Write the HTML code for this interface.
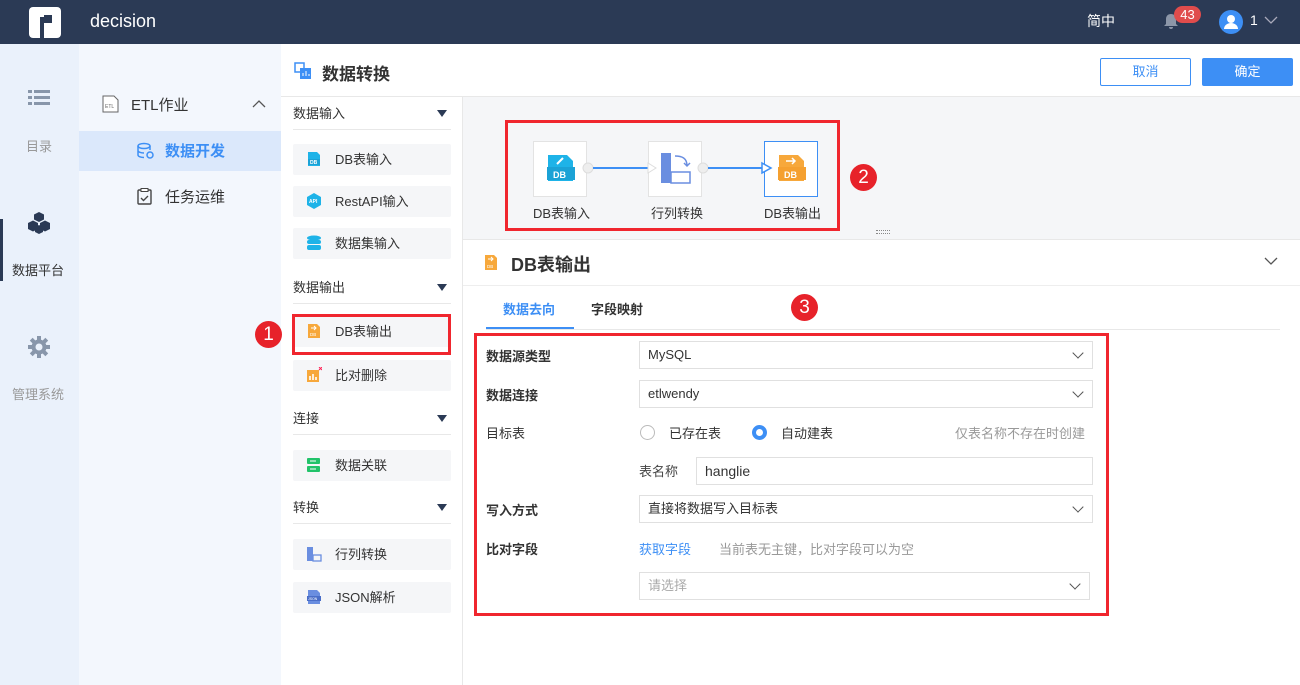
<!DOCTYPE html>
<html><head><meta charset="utf-8"><style>
*{box-sizing:border-box;margin:0;padding:0}
body{width:1300px;height:685px;overflow:hidden;font-family:"Liberation Sans","Noto Sans CJK SC",sans-serif;background:#fff;position:relative;color:#333}
.a{position:absolute}
.top{left:0;top:0;width:1300px;height:44px;background:#2b3a55}
.nav1{left:0;top:44px;width:79px;height:641px;background:#eaf1fb}
.nav2{left:79px;top:44px;width:202px;height:641px;background:#f3f7fd}
.t{font-size:14px;white-space:nowrap}
.item{position:absolute;left:293px;width:158px;height:31px;background:#f5f6f8;border-radius:2px;font-size:13px;color:#333;line-height:31px;padding-left:42px}
.item svg{position:absolute;left:13px;top:7px}
.sec{position:absolute;left:293px;width:158px;height:30px;font-size:13px;color:#333;border-bottom:1px solid #e8e8e8;line-height:28px}
.sec:after{content:"";position:absolute;right:4px;top:10px;border:5px solid transparent;border-top:7px solid #2b3a55;border-bottom:0}
.lbl{position:absolute;left:486px;font-size:13px;font-weight:bold;color:#333}
.sel{position:absolute;left:639px;width:454px;height:28px;border:1px solid #e0e0e0;font-size:13px;line-height:26px;padding-left:8px;color:#333}
.sel:after{content:"";position:absolute;right:10px;top:7px;width:7px;height:7px;border-right:1.5px solid #555;border-bottom:1.5px solid #555;transform:rotate(45deg)}
.badge{position:absolute;width:27px;height:27px;border-radius:50%;background:#e7222a;color:#fff;font-size:19px;text-align:center;line-height:27px}
.node{position:absolute;top:141px;width:54px;height:56px;background:#fff;border:1px solid #e3e3e3}
</style></head><body>
<div class="a top"></div>
<svg class="a" style="left:29px;top:7px" width="32" height="31" viewBox="0 0 32 31"><rect x="0" y="0" width="32" height="31" rx="4" fill="#fff"/><rect x="11" y="10" width="4" height="21" fill="#2b3a55"/><rect x="15" y="8" width="8" height="8" fill="#2b3a55"/></svg>
<div class="a" style="left:90px;top:11px;font-size:18px;color:#fff">decision</div>
<div class="a t" style="left:1087px;top:11px;color:#fff">简中</div>
<svg class="a" style="left:1163px;top:13px" width="16" height="17" viewBox="0 0 16 17"><path d="M8 1c3 0 5 2 5 5v5l2 2H1l2-2V6c0-3 2-5 5-5zM6 14h4a2 2 0 0 1-4 0z" fill="#8c96a8"/></svg>
<div class="a" style="left:1174px;top:6px;width:27px;height:17px;border-radius:9px;background:#e04c4c;color:#fff;font-size:13px;text-align:center;line-height:17px">43</div>
<div class="a" style="left:1219px;top:10px;width:24px;height:24px;border-radius:50%;background:#3d8ff5"></div>
<svg class="a" style="left:1219px;top:10px" width="24" height="24"><circle cx="12" cy="9" r="4" fill="#fff"/><path d="M5 19a7 6 0 0 1 14 0z" fill="#fff"/></svg>
<div class="a t" style="left:1250px;top:12px;color:#fff">1</div>
<svg class="a" style="left:1264px;top:15px" width="14" height="10"><path d="M1 2l6 6 6-6" stroke="#aab" fill="none" stroke-width="1.3"/></svg>

<div class="a nav1"></div>
<div class="a nav2"></div>
<div class="a" style="left:0;top:219px;width:3px;height:62px;background:#2b3a55"></div>
<svg class="a" style="left:28px;top:89px" width="22" height="18"><g fill="#8896aa"><rect x="0" y="1" width="4" height="3"/><rect x="6" y="1" width="16" height="3"/><rect x="0" y="7" width="4" height="3"/><rect x="6" y="7" width="16" height="3"/><rect x="0" y="13" width="4" height="3"/><rect x="6" y="13" width="16" height="3"/></g></svg>
<div class="a" style="left:26px;top:136px;font-size:13px;color:#999">目录</div>
<svg class="a" style="left:28px;top:211px" width="22" height="24" viewBox="0 0 22 24"><g fill="#2b3a55"><path d="M11 1l5 2.5v5l-5 2.5-5-2.5v-5z"/><path d="M5 9.5l5 2.5v6l-5 2.5-5-2.5v-6z"/><path d="M17 9.5l5 2.5v6l-5 2.5-5-2.5v-6z"/><path d="M11 14l4 2v5l-4 2-4-2v-5z"/></g></svg>
<div class="a" style="left:12px;top:260px;font-size:13px;color:#333">数据平台</div>
<svg class="a" style="left:28px;top:336px" width="22" height="22" viewBox="0 0 22 22"><g fill="#8896aa"><circle cx="11" cy="11" r="7.5"/><g id="g"><rect x="9" y="0" width="4" height="5"/><rect x="9" y="17" width="4" height="5"/><rect x="0" y="9" width="5" height="4"/><rect x="17" y="9" width="5" height="4"/></g><use href="#g" transform="rotate(45 11 11)"/></g><circle cx="11" cy="11" r="3.5" fill="#eaf1fb"/></svg>
<div class="a" style="left:12px;top:384px;font-size:13px;color:#999">管理系统</div>

<svg class="a" style="left:102px;top:95px" width="17" height="18"><path d="M1 1h11l4 4v12H1z" fill="#fff" stroke="#666"/><text x="3" y="13" font-size="5" fill="#666" font-family="Liberation Sans">ETL</text></svg>
<div class="a" style="left:131px;top:94px;font-size:15px;color:#333">ETL作业</div>
<svg class="a" style="left:252px;top:99px" width="14" height="9"><path d="M1 8l6-6 6 6" stroke="#555" fill="none" stroke-width="1.3"/></svg>
<div class="a" style="left:79px;top:131px;width:202px;height:40px;background:#dbe8fb"></div>
<svg class="a" style="left:136px;top:142px" width="18" height="18"><ellipse cx="8" cy="4" rx="6" ry="2.5" fill="none" stroke="#3d8ff5" stroke-width="1.5"/><path d="M2 4v9c0 1.5 3 2.5 6 2.5M14 4v4M2 8.5c0 1.5 3 2.5 6 2.5" stroke="#3d8ff5" fill="none" stroke-width="1.5"/><circle cx="14" cy="13" r="3" fill="none" stroke="#3d8ff5" stroke-width="1.5"/></svg>
<div class="a" style="left:165px;top:140px;font-size:15px;font-weight:bold;color:#3d8ff5">数据开发</div>
<svg class="a" style="left:137px;top:188px" width="15" height="17"><rect x="1" y="2" width="13" height="14" rx="1" fill="none" stroke="#444" stroke-width="1.4"/><rect x="4" y="0.5" width="7" height="3" fill="#fff" stroke="#444"/><path d="M4 10l2.5 2.5L11 8" stroke="#444" fill="none" stroke-width="1.4"/></svg>
<div class="a" style="left:165px;top:186px;font-size:15px;color:#333">任务运维</div>

<div class="a" style="left:281px;top:44px;width:1019px;height:53px;background:#fff;border-bottom:1px solid #e8e8e8"></div>
<svg class="a" style="left:294px;top:62px" width="18" height="18"><rect x="1" y="1" width="9" height="9" fill="none" stroke="#3d8ff5" stroke-width="1.5"/><rect x="6" y="6" width="11" height="11" fill="#3d8ff5"/><path d="M9 14v-3M12 14v-5M15 14v-2" stroke="#fff"/></svg>
<div class="a" style="left:322px;top:60px;font-size:17px;font-weight:bold;color:#333">数据转换</div>
<div class="a" style="left:1100px;top:58px;width:91px;height:28px;border:1px solid #3d8ff5;color:#3d8ff5;font-size:13px;text-align:center;line-height:26px;border-radius:2px">取消</div>
<div class="a" style="left:1202px;top:58px;width:91px;height:28px;background:#3d8ff5;color:#fff;font-size:13px;text-align:center;line-height:28px;border-radius:2px">确定</div>

<div class="a" style="left:281px;top:97px;width:182px;height:588px;background:#fff;border-right:1px solid #e8e8e8"></div>
<div class="sec" style="top:100px">数据输入</div>
<div class="item" style="top:144px"><svg width="16" height="16"><path d="M2 1h9l3 3v11H2z" fill="#1eb3e8"/><rect x="2" y="8" width="12" height="6" fill="#1ba2d6"/><text x="4" y="13" font-size="5" fill="#fff" font-family="Liberation Sans" font-weight="bold">DB</text></svg>DB表输入</div>
<div class="item" style="top:186px"><svg width="16" height="16"><path d="M8 0l7 4v8l-7 4-7-4V4z" fill="#1eb3e8"/><text x="3" y="10" font-size="5" fill="#fff" font-family="Liberation Sans" font-weight="bold">API</text></svg>RestAPI输入</div>
<div class="item" style="top:228px"><svg width="16" height="16"><ellipse cx="8" cy="3" rx="7" ry="2.5" fill="#1eb3e8"/><rect x="1" y="5" width="14" height="4" rx="2" fill="#1eb3e8"/><rect x="1" y="10" width="14" height="5" rx="2" fill="#1eb3e8"/></svg>数据集输入</div>
<div class="sec" style="top:274px">数据输出</div>
<div class="item" style="top:316px"><svg width="16" height="16"><path d="M2 1h9l3 3v11H2z" fill="#f7a83b"/><path d="M5 5h5M8 3l2 2-2 2" stroke="#fff" fill="none"/><text x="4" y="13" font-size="4.5" fill="#fff" font-family="Liberation Sans">DB</text></svg>DB表输出</div>
<div class="item" style="top:360px"><svg width="16" height="16"><rect x="1" y="3" width="12" height="12" fill="#f7a83b"/><path d="M4 13v-4M7 13v-6M10 13v-3" stroke="#fff" stroke-width="1.6"/><path d="M13 0l3 3M16 0l-3 3" stroke="#f25" /></svg>比对删除</div>
<div class="sec" style="top:405px">连接</div>
<div class="item" style="top:450px"><svg width="16" height="16"><rect x="1" y="1" width="13" height="6" rx="1" fill="#22c36a"/><rect x="1" y="9" width="13" height="6" rx="1" fill="#22c36a"/><path d="M4 4h6M4 12h6" stroke="#fff"/></svg>数据关联</div>
<div class="sec" style="top:494px">转换</div>
<div class="item" style="top:539px"><svg width="16" height="16"><rect x="1" y="1" width="6" height="14" fill="#6a8ee0"/><rect x="7" y="9" width="8" height="6" fill="none" stroke="#6a8ee0" stroke-width="1.3"/></svg>行列转换</div>
<div class="item" style="top:582px"><svg width="16" height="16"><path d="M2 1h9l3 3v11H2z" fill="#6a8ee0"/><rect x="1" y="7" width="14" height="5" fill="#4a6ec8"/><text x="2" y="11" font-size="3.5" fill="#fff" font-family="Liberation Sans">JSON</text></svg>JSON解析</div>
<div class="a" style="left:292px;top:314px;width:159px;height:41px;border:3px solid #f0262e"></div>
<div class="badge" style="left:255px;top:321px">1</div>

<div class="a" style="left:463px;top:97px;width:837px;height:143px;background:#f5f6f8;border-bottom:1px solid #e8e8e8"></div>
<div class="node" style="left:533px"></div><div class="node" style="left:648px"></div><div class="node" style="left:764px;border-color:#3d8ff5"></div>
<svg class="a" style="left:545px;top:151px" width="32" height="34"><path d="M3 4h19l6 6v20H3z" fill="#1eb3e8"/><rect x="2" y="16" width="28" height="13" fill="#1ba2d6"/><text x="8" y="27" font-size="9" fill="#fff" font-family="Liberation Sans" font-weight="bold">DB</text><path d="M12 13l6-6" stroke="#fff" stroke-width="2"/></svg>
<svg class="a" style="left:660px;top:152px" width="32" height="34"><rect x="1" y="1" width="10" height="30" fill="#6a8ee0"/><rect x="11" y="20" width="19" height="11" fill="#fff" stroke="#6a8ee0" stroke-width="1.5"/><path d="M15 4c7 0 12 2 12 10M24 11l3 3 3-3" stroke="#6a8ee0" fill="none" stroke-width="1.5"/></svg>
<svg class="a" style="left:776px;top:151px" width="32" height="34"><path d="M3 4h19l6 6v20H3z" fill="#f7a83b"/><rect x="2" y="16" width="28" height="13" fill="#f5a030"/><text x="8" y="27" font-size="9" fill="#fff" font-family="Liberation Sans" font-weight="bold">DB</text><path d="M10 10h9M16 7l3 3-3 3" stroke="#fff" fill="none" stroke-width="1.5"/></svg>
<svg class="a" style="left:580px;top:160px" width="200" height="18"><circle cx="8" cy="8" r="5" fill="#eee" stroke="#ddd"/><path d="M13 8h55" stroke="#3d8ff5" stroke-width="2"/><path d="M68 3l8 5-8 5z" fill="#fff" stroke="#ddd"/><circle cx="123" cy="8" r="5" fill="#eee" stroke="#ddd"/><path d="M128 8h55" stroke="#3d8ff5" stroke-width="2"/><path d="M182 3l9 5-9 5z" fill="#fff" stroke="#3d8ff5" stroke-width="1.5"/></svg>
<div class="a" style="left:533px;top:203px;font-size:13px;color:#333">DB表输入</div>
<div class="a" style="left:651px;top:203px;font-size:13px;color:#333">行列转换</div>
<div class="a" style="left:764px;top:203px;font-size:13px;color:#333">DB表输出</div>
<div class="a" style="left:505px;top:120px;width:335px;height:111px;border:3px solid #f0262e"></div>
<div class="badge" style="left:850px;top:164px">2</div>
<div class="a" style="left:876px;top:230px;width:14px;height:4px;border-top:1px dotted #888;border-bottom:1px dotted #888"></div>

<svg class="a" style="left:483px;top:254px" width="16" height="17"><path d="M2 1h9l3 3v12H2z" fill="#f7a83b"/><path d="M5 5h5M8 3l2 2-2 2" stroke="#fff" fill="none"/><text x="4" y="14" font-size="4.5" fill="#fff" font-family="Liberation Sans">DB</text></svg>
<div class="a" style="left:511px;top:251px;font-size:18px;font-weight:bold;color:#333">DB表输出</div>
<svg class="a" style="left:1264px;top:257px" width="14" height="9"><path d="M1 1l6 6 6-6" stroke="#555" fill="none" stroke-width="1.3"/></svg>
<div class="a" style="left:463px;top:285px;width:837px;height:1px;background:#eee"></div>
<div class="a" style="left:503px;top:299px;font-size:13px;font-weight:bold;color:#3d8ff5">数据去向</div>
<div class="a" style="left:591px;top:299px;font-size:13px;font-weight:bold;color:#333">字段映射</div>
<div class="a" style="left:486px;top:329px;width:794px;height:1px;background:#e8e8e8"></div>
<div class="a" style="left:486px;top:327px;width:88px;height:2px;background:#3d8ff5"></div>
<div class="badge" style="left:791px;top:294px">3</div>

<div class="a" style="left:474px;top:333px;width:635px;height:283px;border:3px solid #f0262e"></div>
<div class="lbl" style="top:346px">数据源类型</div><div class="sel" style="top:341px">MySQL</div>
<div class="lbl" style="top:385px">数据连接</div><div class="sel" style="top:380px">etlwendy</div>
<div class="lbl" style="top:423px;font-weight:normal">目标表</div>
<div class="a" style="left:640px;top:425px;width:15px;height:15px;border-radius:50%;border:1px solid #bbb"></div>
<div class="a" style="left:669px;top:423px;font-size:13px">已存在表</div>
<div class="a" style="left:752px;top:425px;width:15px;height:15px;border-radius:50%;border:4px solid #3d8ff5"></div>
<div class="a" style="left:781px;top:423px;font-size:13px">自动建表</div>
<div class="a" style="left:955px;top:423px;font-size:13px;color:#999">仅表名称不存在时创建</div>
<div class="a" style="left:639px;top:461px;font-size:13px;color:#444">表名称</div>
<div class="sel" style="left:696px;width:397px;top:457px;font-size:14px">hanglie</div>
<style>.sel[style*="left:696px"]:after{display:none}</style>
<div class="lbl" style="top:500px">写入方式</div><div class="sel" style="top:495px">直接将数据写入目标表</div>
<div class="lbl" style="top:539px">比对字段</div>
<div class="a" style="left:639px;top:539px;font-size:13px;color:#3d8ff5">获取字段</div>
<div class="a" style="left:719px;top:539px;font-size:13px;color:#999">当前表无主键，比对字段可以为空</div>
<div class="sel" style="top:572px;width:451px;color:#aaa">请选择</div>
</body></html>
